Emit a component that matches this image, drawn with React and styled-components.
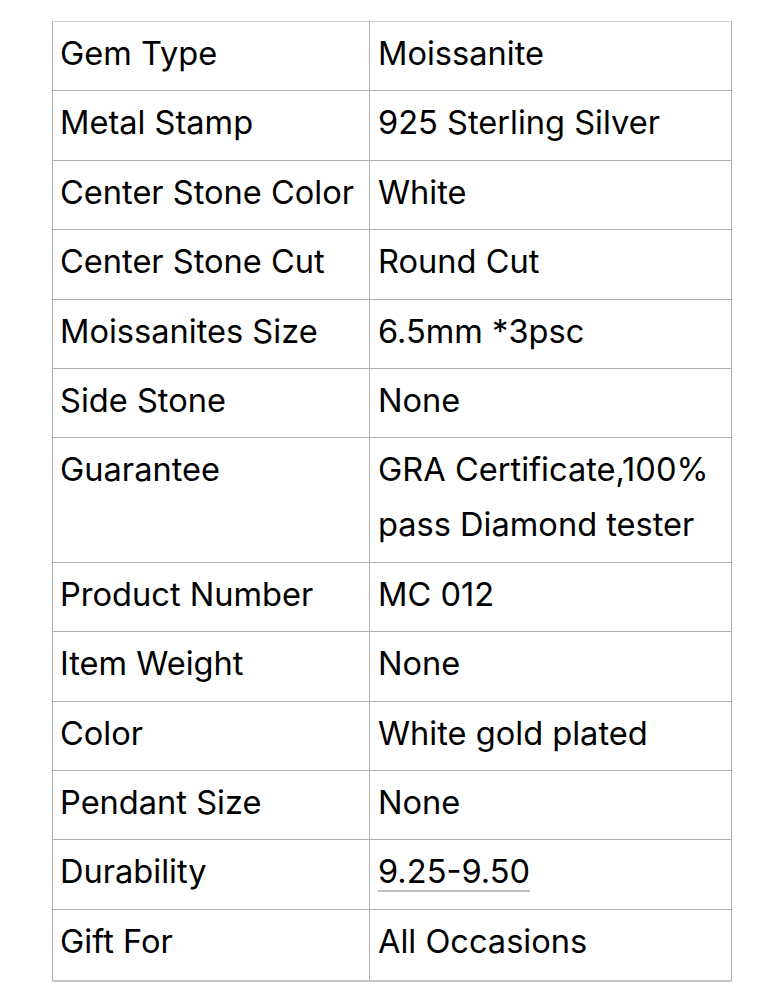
import React from "react";
import styled, { createGlobalStyle } from "styled-components";

const Global = createGlobalStyle`
  html, body { margin: 0; padding: 0; background: #ffffff; }
  body { font-family: Inter, "Noto Sans", sans-serif; color: #000; }
`;

const Page = styled.div`
  padding: 21px 0 0 52px;
`;

const Table = styled.table`
  border-collapse: collapse;
  width: 679px;
  table-layout: fixed;
  font-size: 32.6px;
  line-height: 55px;
  letter-spacing: 0;
`;

const Col = styled.col`
  width: ${(p) => p.$w}px;
`;

const Row = styled.tr`
  &:first-child > td { border-top-color: #cfcfcf; }
  &:last-child > td {
    padding-bottom: 11.4px;
    border-bottom: 2px solid #c4c4c4;
  }
`;

const Cell = styled.td`
  border: 1px solid #b0b0b0;
  padding: 4px 0 9.4px ${(p) => p.$pl}px;
  vertical-align: top;
  font-weight: 400;
`;

const Dotted = styled.span`
  text-decoration: underline;
  text-decoration-color: #bdbdbd;
  text-decoration-thickness: 2px;
  text-underline-offset: 7px;
`;

const rows = [
  ["Gem Type", "Moissanite"],
  ["Metal Stamp", "925 Sterling Silver"],
  ["Center Stone Color", "White"],
  ["Center Stone Cut", "Round Cut"],
  ["Moissanites Size", "6.5mm *3psc"],
  ["Side Stone", "None"],
  ["Guarantee", "GRA Certificate,100% pass Diamond tester"],
  ["Product Number", "MC 012"],
  ["Item Weight", "None"],
  ["Color", "White gold plated"],
  ["Pendant Size", "None"],
  ["Durability", "9.25-9.50", true],
  ["Gift For", "All Occasions"],
];

export default function App() {
  return (
    <Page>
      <Global />
      <Table>
        <colgroup>
          <Col $w={317} />
          <Col $w={362} />
        </colgroup>
        <tbody>
          {rows.map(([k, v, u]) => (
            <Row key={k}>
              <Cell $pl={7}>{k}</Cell>
              <Cell $pl={8}>{u ? <Dotted>{v}</Dotted> : v}</Cell>
            </Row>
          ))}
        </tbody>
      </Table>
    </Page>
  );
}
